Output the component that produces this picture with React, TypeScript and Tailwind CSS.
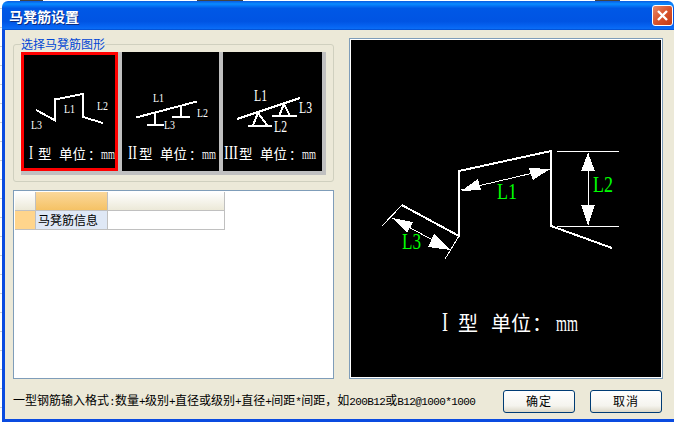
import type { ReactNode } from 'react'

const serif = "font-['Liberation_Serif','Noto_Sans_CJK_SC',serif]"

function Label({ x, y, size, w, children, green }: { x: number; y: number; size: number; w?: number; children: ReactNode; green?: boolean }) {
  return (
    <text
      x={x}
      y={y}
      fontSize={size}
      fill={green ? '#00ff00' : '#ffffff'}
      className={serif}
      textLength={w}
      lengthAdjust={w ? 'spacingAndGlyphs' : undefined}
    >
      {children}
    </text>
  )
}

// caption row under each small drawing, latin letters are squeezed like the bitmap font
function Caption({ num, numX, numScale, x }: { num: string; numX: number; numScale: number; x: number }) {
  return (
    <>
      <g transform={`translate(${numX} 159) scale(${numScale} 1)`}>
        <Label x={0} y={0} size={18}>{num}</Label>
      </g>
      <Label x={x} y={159} size={13.5}>型</Label>
      <Label x={x + 21} y={159} size={13.5}>单位</Label>
      <Label x={x + 50} y={159} size={13}>：</Label>
      <g transform={`translate(${x + 63} 159) scale(0.64 1)`}>
        <Label x={0} y={0} size={14}>mm</Label>
      </g>
    </>
  )
}

function ThumbOne() {
  return (
    <svg width="91" height="113" viewBox="24 55 91 113" className="block">
      <polyline points="36,110 54.5,120 54.5,99.5 83,94 83,117 103,123" fill="none" stroke="#fff" strokeWidth="2" shapeRendering="crispEdges" />
      <Label x={64} y={113} size={13} w={11}>L1</Label>
      <Label x={97} y={110} size={13} w={11}>L2</Label>
      <Label x={31} y={129} size={13} w={11}>L3</Label>
      <Caption num="I" numX={29} numScale={0.67} x={38} />
    </svg>
  )
}

function ThumbTwo() {
  return (
    <svg width="97" height="119" viewBox="122 52 97 119" className="block">
      <path d="M136 117.5 197 101.5M155 113V125M147 125H164M181 106V117M172 117H190" fill="none" stroke="#fff" strokeWidth="2" shapeRendering="crispEdges" />
      <Label x={153} y={102} size={13} w={11}>L1</Label>
      <Label x={197} y={117} size={13} w={11}>L2</Label>
      <Label x={164} y={129} size={13} w={11}>L3</Label>
      <Caption num="II" numX={128} numScale={0.75} x={139} />
    </svg>
  )
}

function ThumbThree() {
  return (
    <svg width="99" height="119" viewBox="223 52 99 119" className="block">
      <path d="M237 119 300 98M258 113 253 125M258 113 267 125M248 126H272M284 104 279 116M284 104 290 116M272 116H297" fill="none" stroke="#fff" strokeWidth="2" shapeRendering="crispEdges" />
      <Label x={254} y={101} size={16} w={13}>L1</Label>
      <Label x={299} y={113} size={16} w={13}>L3</Label>
      <Label x={274} y={132} size={16} w={13}>L2</Label>
      <Caption num="III" numX={224} numScale={0.78} x={239} />
    </svg>
  )
}

function Preview() {
  return (
    <svg width="310" height="337" viewBox="351 40 310 337" className="block">
      <polyline points="401.7,205 459,236 459,171 551,151 551,226 612,248" fill="none" stroke="#fff" strokeWidth="2" shapeRendering="crispEdges" />
      <path d="M557 151H619M557 226H619M588 153V225M461 190 550 169M382 226 402 205M445 259 459 236M392 218 451 250" fill="none" stroke="#fff" strokeWidth="1" shapeRendering="crispEdges" />
      <path d="M588 153 581 171H595ZM588 225 581 205H595ZM550 169 529 168 533 180ZM461 191 478 179 481 190ZM392 218 413 222 407 233ZM451 250 434 234 428 247Z" fill="#fff" shapeRendering="crispEdges" />
      <Label x={497} y={199} size={23} w={20} green>L1</Label>
      <Label x={593} y={192} size={23} w={20} green>L2</Label>
      <Label x={402} y={249} size={23} w={19} green>L3</Label>
      <Label x={442} y={331} size={27} w={6}>I</Label>
      <Label x={458} y={331} size={20}>型</Label>
      <Label x={491} y={331} size={20}>单位</Label>
      <Label x={532} y={331} size={20}>：</Label>
      <Label x={556} y={331} size={24} w={22}>mm</Label>
    </svg>
  )
}

// ascii in the original bitmap font is half width, 6px a char
function A({ children }: { children: ReactNode }) {
  return <span className="font-['Liberation_Mono',monospace] text-[11px] tracking-[-0.6px]">{children}</span>
}

function XpButton({ children }: { children: ReactNode }) {
  return (
    <button className="w-[72px] h-[23px] pb-[2px] rounded-[3px] border border-[#003c74] bg-[linear-gradient(180deg,#ffffff_0%,#f5f4ee_70%,#dcd8c8_100%)] text-[12px] text-black tracking-[1px]">
      {children}
    </button>
  )
}

export default function App() {
  return (
    <div className="w-[674px] h-[422px] overflow-hidden bg-white pl-[2px] font-['Noto_Sans_CJK_SC',sans-serif] bg-[repeating-linear-gradient(180deg,#ffffff_0px,#ffffff_18px,#d0d0d0_18px,#d0d0d0_19px)] bg-[position:0_-10px]">
      {/* bits of the window behind, on the top row */}
      <div className="h-px flex -ml-[2px]">
        <div className="w-[20px]" />
        <div className="w-[23px] bg-[#444444]" />
        <div className="w-[154px]" />
        <div className="w-[46px] bg-[#444444]" />
        <div className="w-[352px]" />
        <div className="w-[25px] bg-[#444444]" />
      </div>
      <div className="w-[690px] h-[421px] flex flex-col">
        {/* Title bar */}
        <div className="h-[29px] shrink-0 rounded-t-[6px] w-[672px] flex items-center justify-between pl-[7px] pr-[1px] bg-[linear-gradient(180deg,#0a5be0_0%,#0a8bff_10%,#0058e6_25%,#0054e3_70%,#0664f2_88%,#0a6cf5_95%,#0047c8_100%)]">
          <span className="text-[14px] font-bold text-white leading-none [text-shadow:1px_1px_0_#0a2a80]">马凳筋设置</span>
          <div className="w-[21px] h-[21px] rounded-[3px] border border-white bg-[linear-gradient(135deg,#e88a6a_0%,#d9532c_50%,#c23a14_100%)] flex items-center justify-center">
            <svg width="13" height="13" viewBox="0 0 13 13">
              <path d="M2 2 11 11M11 2 2 11" stroke="#fff" strokeWidth="2.4" />
            </svg>
          </div>
        </div>

        {/* Dialog body */}
        <div className="w-[672px] flex-1 flex flex-col bg-[#ece9d8] border-l-[3px] border-b-[3px] border-[#0a4be0] pl-[8px] pr-[11px]">
          <div className="flex gap-[15px]">
            <div className="w-[321px] pt-[7px]">
              <fieldset className="h-[145px] border border-[#d0d0bf] rounded-[3px] px-[7px]">
                <legend className="bg-[#ece9d8] text-[12px] leading-[14px] text-[#0046d5]">选择马凳筋图形</legend>
                <div className="w-[305px] mt-px flex gap-[4px] bg-[#c0c0c0] pr-[4px] pb-[4px]">
                  <div className="bg-black border-[3px] border-[#ff0000]">
                    <ThumbOne />
                  </div>
                  <div className="bg-black">
                    <ThumbTwo />
                  </div>
                  <div className="bg-black">
                    <ThumbThree />
                  </div>
                </div>
              </fieldset>

              {/* Info grid */}
              <div className="mt-[8px] h-[189px] bg-white border border-[#7f9db9] p-px">
                <div className="grid grid-cols-[21px_72px_117px] w-[210px] text-[12px] leading-[18px] text-black">
                  <div className="h-[19px] border-r border-b border-[#c0c0c0] bg-[linear-gradient(180deg,#ffffff,#ece9d8)]" />
                  <div className="h-[19px] border-r border-b border-[#c0c0c0] bg-[linear-gradient(180deg,#fbd89b,#f5c265)]" />
                  <div className="h-[19px] border-r border-b border-[#c0c0c0] bg-[linear-gradient(180deg,#ffffff,#ece9d8)]" />
                  <div className="h-[19px] border-r border-b border-[#c0c0c0] bg-[#ffd58c]" />
                  <div className="h-[19px] border-r border-b border-[#c0c0c0] bg-[#dfe8f6] pl-[2px] whitespace-nowrap">马凳筋信息</div>
                  <div className="h-[19px] border-r border-b border-[#c0c0c0] bg-white" />
                </div>
              </div>
            </div>

            {/* Big preview */}
            <div className="mt-[8px] w-[314px] h-[341px] border border-[#7f9db9] bg-white p-px">
              <div className="bg-black">
                <Preview />
              </div>
            </div>
          </div>

          {/* Footer */}
          <div className="mt-[11px] flex items-center">
            <p className="w-[490px] pb-[2px] text-[12px] text-black whitespace-nowrap">
              一型钢筋输入格式<A>:</A>数量<A>+</A>级别<A>+</A>直径或级别<A>+</A>直径<A>+</A>间距<A>*</A>间距，如<A>200B12</A>或<A>B12@1000*1000</A>
            </p>
            <XpButton>确定</XpButton>
            <div className="w-[15px]" />
            <XpButton>取消</XpButton>
          </div>
        </div>
      </div>
    </div>
  )
}
